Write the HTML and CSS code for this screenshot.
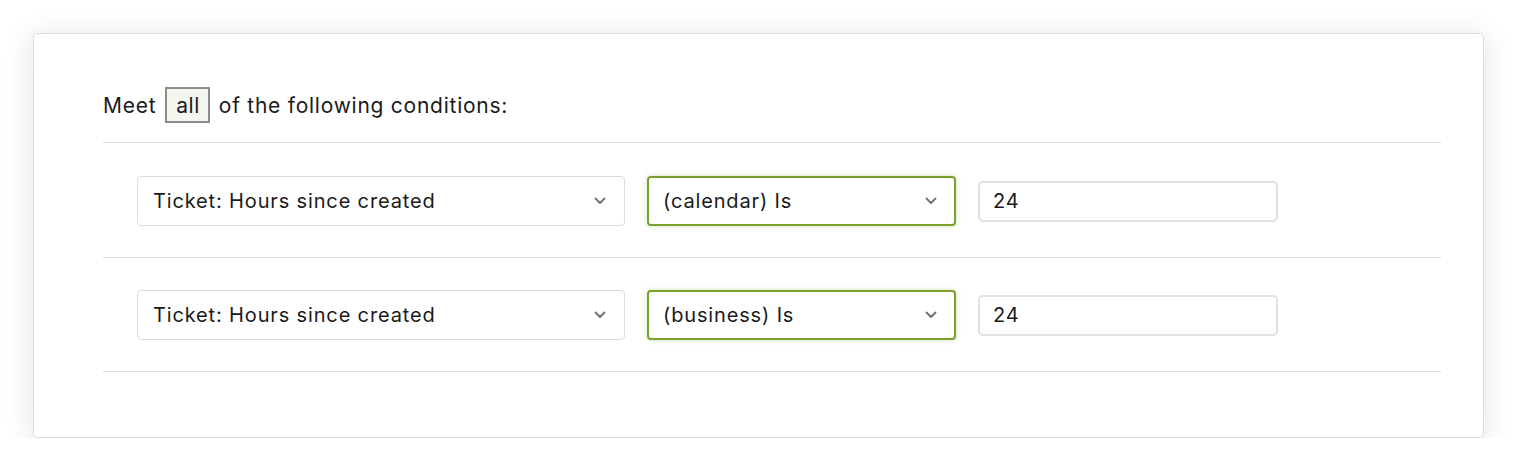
FILE: index.html
```html
<!DOCTYPE html>
<html lang="en">
<head>
<meta charset="utf-8">
<title>Conditions</title>
<link rel="stylesheet" href="styles.css">
</head>
<body>
<div class="card">
  <div class="heading">
    <span>Meet</span>
    <span class="all-box">all</span>
    <span>of the following conditions:</span>
  </div>
  <div class="row">
    <div class="select field-wide">
      <span>Ticket: Hours since created</span>
      <svg class="chev" viewBox="0 0 12 8" width="12" height="8"><path d="M1.5 1.5 L6 6 L10.5 1.5" fill="none" stroke="#6f6f6f" stroke-width="1.8" stroke-linecap="round" stroke-linejoin="round"/></svg>
    </div>
    <div class="select field-op focused">
      <span>(calendar) Is</span>
      <svg class="chev" viewBox="0 0 12 8" width="12" height="8"><path d="M1.5 1.5 L6 6 L10.5 1.5" fill="none" stroke="#6f6f6f" stroke-width="1.8" stroke-linecap="round" stroke-linejoin="round"/></svg>
    </div>
    <div class="text-input">24</div>
  </div>
  <div class="row last">
    <div class="select field-wide">
      <span>Ticket: Hours since created</span>
      <svg class="chev" viewBox="0 0 12 8" width="12" height="8"><path d="M1.5 1.5 L6 6 L10.5 1.5" fill="none" stroke="#6f6f6f" stroke-width="1.8" stroke-linecap="round" stroke-linejoin="round"/></svg>
    </div>
    <div class="select field-op focused">
      <span>(business) Is</span>
      <svg class="chev" viewBox="0 0 12 8" width="12" height="8"><path d="M1.5 1.5 L6 6 L10.5 1.5" fill="none" stroke="#6f6f6f" stroke-width="1.8" stroke-linecap="round" stroke-linejoin="round"/></svg>
    </div>
    <div class="text-input">24</div>
  </div>
</div>
</body>
</html>
```

FILE: styles.css
```css
html, body {
  margin: 0;
  padding: 0;
  background: #ffffff;
}

body {
  font-family: Inter, "Noto Sans", "Liberation Sans", sans-serif;
  color: #1a1a1a;
  padding: 33px 0 0 33px;
}

.card {
  box-sizing: border-box;
  width: 1451px;
  height: 405px;
  background: #ffffff;
  border: 1px solid #dcdcdc;
  border-radius: 5px;
  box-shadow: 0 3px 30px rgba(0, 0, 0, 0.12);
  padding: 53px 42px 0 69px;
}

.heading {
  display: flex;
  align-items: center;
  gap: 9px;
  height: 36px;
  font-size: 21px;
  letter-spacing: 0.75px;
  margin-bottom: 19px;
}

.all-box {
  box-sizing: border-box;
  height: 36px;
  padding: 0 8px 0 9px;
  display: flex;
  align-items: center;
  border: 2px solid #8c8c8c;
  background: #f6f6f1;
  letter-spacing: 0.5px;
}

.row {
  display: flex;
  align-items: center;
  gap: 22px;
  border-top: 1px solid #dddddd;
  padding: 33px 0 31px 34px;
}

.row.last {
  border-bottom: 1px solid #dddddd;
  padding-top: 32px;
  padding-bottom: 31px;
}

.select {
  box-sizing: border-box;
  height: 50px;
  display: flex;
  align-items: center;
  justify-content: space-between;
  padding: 0 18px 0 15px;
  border: 1px solid #d8dcde;
  border-radius: 4px;
  font-size: 20px;
  letter-spacing: 0.85px;
  background: #ffffff;
}

.field-wide {
  width: 488px;
}

.field-op {
  width: 309px;
}

.select.focused {
  border: 2px solid #7aa12d;
  padding-left: 14px;
  padding-right: 17px;
  box-shadow: 0 0 5px rgba(122, 161, 45, 0.35);
}

.chev {
  flex: none;
}

.text-input {
  box-sizing: border-box;
  width: 300px;
  height: 41px;
  display: flex;
  align-items: center;
  padding: 0 13px;
  border: 2px solid #dfe2e0;
  border-radius: 5px;
  font-size: 20px;
  letter-spacing: 0.85px;
}
```
